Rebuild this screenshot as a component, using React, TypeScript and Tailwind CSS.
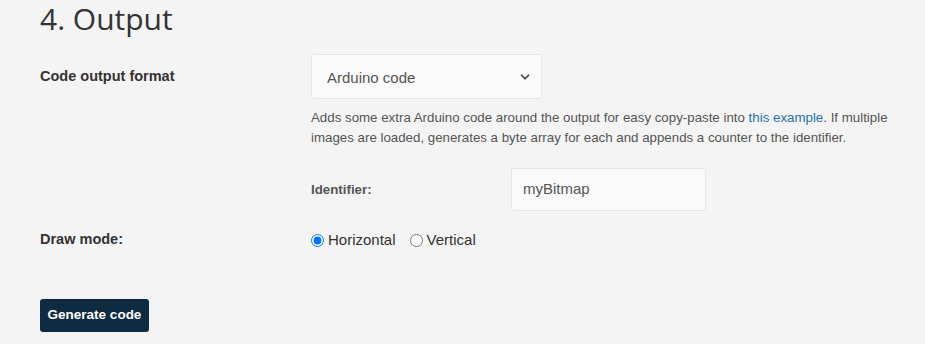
import { ChevronDown } from 'lucide-react'

export default function App() {
  return (
    <div className="min-h-[344px] w-full bg-[#f4f4f4] font-['Liberation_Sans',Arial,sans-serif] text-[#333]">
      <div className="pl-10 pr-[20px]">
        <h2 className="font-['Open_Sans',sans-serif] text-[30px] leading-[38px] font-normal text-[#333]">
          4. Output
        </h2>

        {/* code output format */}
        <div className="mt-[16px] flex">
          <div className="flex h-[45px] w-[271px] shrink-0 items-center text-[14.5px] font-bold">Code output format</div>
          <div className="flex-1">
            <div className="relative h-[45px] w-[231px] rounded-[3px] border border-[#e6e6e6] bg-[#fafafa]">
              <span className="absolute left-[15px] top-[12px] text-[15px] text-[#555]">Arduino code</span>
              <ChevronDown size={14} strokeWidth={3} className="absolute right-[9px] top-[15px] text-[#444]" />
            </div>
            <p className="mt-[9px] w-[595px] text-[13.3px] leading-[20px] text-[#555]">
              Adds some extra Arduino code around the output for easy copy-paste into{' '}
              <a className="text-[#2572b4]">this example</a>. If multiple images are loaded, generates a byte array for
              each and appends a counter to the identifier.
            </p>
            <div className="mt-[20px] flex items-center">
              <div className="w-[200px] text-[13.3px] font-bold text-[#555]">Identifier:</div>
              <div className="flex h-[43px] w-[195px] items-center rounded-[3px] border border-[#e6e6e6] bg-[#fafafa] px-[11px] text-[15px] text-[#555]">
                myBitmap
              </div>
            </div>
          </div>
        </div>

        {/* draw mode */}
        <div className="mt-[18px] flex items-center">
          <div className="w-[271px] text-[14.5px] font-bold">Draw mode:</div>
          <label className="flex items-center text-[15px] text-[#333]">
            <input type="radio" name="mode" defaultChecked className="m-0 mr-[4px] h-[13px] w-[13px]" />
            Horizontal
          </label>
          <label className="ml-[14px] flex items-center text-[15px] text-[#333]">
            <input type="radio" name="mode" className="m-0 mr-[4px] h-[13px] w-[13px]" />
            Vertical
          </label>
        </div>

        <button className="mt-[47px] h-[33px] w-[109px] rounded-[3px] bg-[#0e2b42] text-[13.5px] font-bold text-white">
          Generate code
        </button>
      </div>
    </div>
  )
}
